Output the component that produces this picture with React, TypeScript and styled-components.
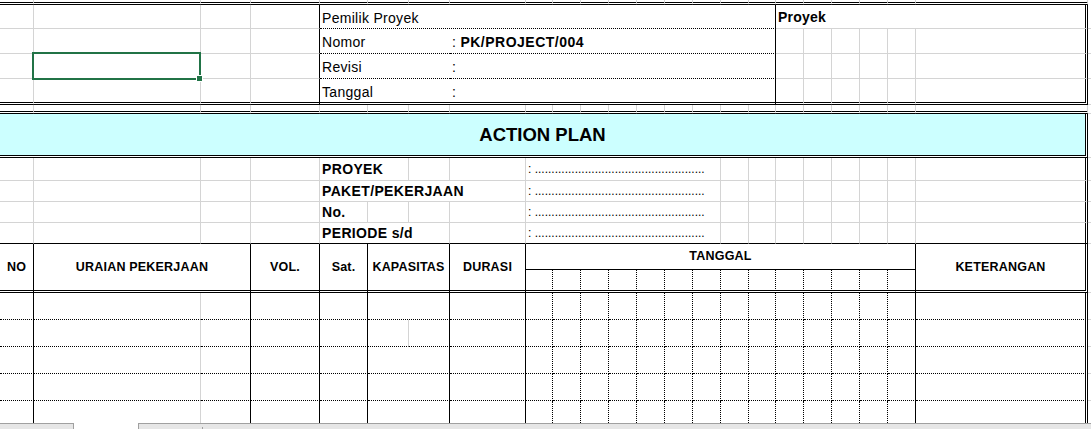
import React from 'react';
import styled, { createGlobalStyle } from 'styled-components';

const GlobalStyle = createGlobalStyle`
  html, body { margin: 0; padding: 0; background: #fff; overflow: hidden; }
  body { font-family: "Liberation Sans", Arial, sans-serif; color: #000; }
`;

type Line = 'g' | 's' | 'd' | 'w' | 'n';

const lineCss = (l: Line) => {
  switch (l) {
    case 'g':
      return '1px solid #d4d4d4';
    case 's':
      return '1px solid #000';
    case 'd':
      return '1px dotted #000';
    case 'w':
      return '3px double #000';
    default:
      return '0';
  }
};

const COLS = [34, 167, 50, 69, 48, 41, 41, 76, 27, 28, 28, 28, 28, 28, 28, 28, 27, 28, 28, 28, 28, 28, 172, 3];
const ROWS = [5, 24, 25, 25, 26, 9, 44, 23, 21, 21, 21, 26, 23, 27, 27, 27, 27, 22];

const Page = styled.div`
  width: 1091px;
  height: 429px;
  display: flex;
  flex-direction: column;
  overflow: hidden;
`;

const Sheet = styled.div`
  position: relative;
  display: grid;
  grid-template-columns: ${COLS.map((c) => `${c}px`).join(' ')};
  grid-template-rows: ${ROWS.map((r) => `${r}px`).join(' ')};
  width: 1091px;
`;

const Cell = styled.div<{
  $r?: Line;
  $b?: Line;
  $span?: number;
  $rows?: number;
  $bg?: string;
  $center?: boolean;
  $pt?: number;
}>`
  box-sizing: border-box;
  grid-column: span ${(p) => p.$span ?? 1};
  grid-row: span ${(p) => p.$rows ?? 1};
  border-right: ${(p) => lineCss(p.$r ?? 'g')};
  border-bottom: ${(p) => lineCss(p.$b ?? 'g')};
  background: ${(p) => p.$bg ?? 'transparent'};
  background-clip: padding-box;
  display: flex;
  align-items: center;
  justify-content: ${(p) => (p.$center ? 'center' : 'flex-start')};
  padding: ${(p) => p.$pt ?? 0}px ${(p) => (p.$center ? 0 : 2)}px 0;
  white-space: nowrap;
  min-width: 0;
  min-height: 0;
`;

const Txt = styled.span<{ $size?: number; $bold?: boolean; $ls?: number }>`
  font-size: ${(p) => p.$size ?? 14}px;
  font-weight: ${(p) => (p.$bold ? 700 : 400)};
  letter-spacing: ${(p) => p.$ls ?? 0.3}px;
  line-height: 16px;
  white-space: nowrap;
`;

const Dots = styled.span`
  font-size: 12px;
  line-height: 14px;
  white-space: nowrap;
`;

const Title = styled.span`
  font-size: 18.5px;
  font-weight: 700;
  line-height: 22px;
`;

const ColHead = styled.span`
  font-size: 12.5px;
  font-weight: 700;
  letter-spacing: 0.2px;
  line-height: 15px;
`;

const Selection = styled.div`
  position: absolute;
  left: 32px;
  top: 52px;
  width: 169px;
  height: 28px;
  box-sizing: border-box;
  border: 2px solid #217346;
  pointer-events: none;
`;

const Handle = styled.div`
  position: absolute;
  left: 163px;
  top: 22px;
  width: 5px;
  height: 5px;
  background: #217346;
  box-shadow: 0 0 0 1px #fff;
`;

const TabStrip = styled.div`
  display: flex;
  height: 6px;
`;

const TabBlock = styled.div<{ $w?: number; $side: 'left' | 'right' }>`
  box-sizing: border-box;
  ${(p) => (p.$w ? `width: ${p.$w}px;` : 'flex: 1;')}
  height: 6px;
  background: #e6e6e6;
  border-top: 1px solid #a0a0a0;
  ${(p) => (p.$side === 'right' ? 'border-right: 1px solid #a0a0a0;' : 'border-left: 1px solid #a0a0a0;')}
  display: flex;
`;

const TabGap = styled.div<{ $w: number }>`
  width: ${(p) => p.$w}px;
  height: 6px;
  background: #fff;
`;

const TabDivider = styled.div`
  margin-left: 63px;
  margin-top: 3px;
  width: 1px;
  background: #a0a0a0;
`;

type Spec = {
  s?: number;
  rs?: number;
  r?: Line;
  b?: Line;
  bg?: string;
  c?: boolean;
  pt?: number;
  children?: React.ReactNode;
};

const e = (n: number, r: Line, b: Line): Spec[] => Array.from({ length: n }, () => ({ r, b }));

const headerBoxRow = (label: string, value: React.ReactNode, last: boolean): Spec[] => {
  const b: Line = last ? 'w' : 'd';
  const gb: Line = last ? 'w' : 'g';
  return [
    ...e(3, 'g', gb),
    { r: 's', b: gb },
    { s: 3, r: 'n', b, pt: 2, children: <Txt>{label}</Txt> },
    { s: 10, r: 's', b, pt: 2, children: value },
    ...e(5, 'g', gb),
    { r: 'w', b: gb },
    { r: 'g', b: 'g' },
  ];
};

const DOTS = ': ' + '.'.repeat(51);

const infoRow = (label: string, spans: number[], last: boolean): Spec[] => {
  const b: Line = last ? 's' : 'g';
  return [
    ...e(4, 'g', b),
    ...spans.map((s, i) => ({
      s,
      r: 'g' as Line,
      b,
      children: i === 0 ? <Txt $bold $ls={0.35}>{label}</Txt> : null,
    })),
    { s: 7, r: 'g', b, children: <Dots>{DOTS}</Dots> },
    ...e(7, 'g', b),
    { r: 'w', b },
    { r: 'g', b: 'g' },
  ];
};

const dataRow = (i: number, last: boolean): Spec[] => {
  const b: Line = last ? 'n' : 'd';
  return [
    { r: 's', b },
    { r: 'g', b },
    { r: 's', b },
    { r: 's', b },
    { r: 's', b },
    ...(i === 1 ? ([{ r: 'g', b }, { r: 's', b }] as Spec[]) : ([{ s: 2, r: 's', b }] as Spec[])),
    { r: 's', b },
    ...e(13, 'd', b),
    { r: 's', b },
    { r: 'w', b },
    { r: 'g', b: last ? 'n' : 'g' },
  ];
};

const head = (text: string, s = 1): Spec => ({
  s,
  rs: 2,
  r: 's',
  b: 'w',
  c: true,
  children: <ColHead>{text}</ColHead>,
});

const rows: Spec[][] = [
  [...e(23, 'g', 'w'), { r: 'g', b: 'n' }],
  [
    ...e(3, 'g', 'g'),
    { r: 's', b: 'g' },
    { s: 13, r: 's', b: 'd', pt: 2, children: <Txt>Pemilik Proyek</Txt> },
    { s: 6, r: 'w', b: 'g', pt: 1, children: <Txt $bold $ls={0.2}>Proyek</Txt> },
    { r: 'g', b: 'g' },
  ],
  headerBoxRow(
    'Nomor',
    <Txt>
      : <Txt $bold $ls={0.5}>PK/PROJECT/004</Txt>
    </Txt>,
    false,
  ),
  headerBoxRow('Revisi', <Txt>:</Txt>, false),
  headerBoxRow('Tanggal', <Txt>:</Txt>, true),
  [...e(23, 'g', 'w'), { r: 'g', b: 'g' }],
  [
    { s: 23, r: 'w', b: 'w', bg: '#ccffff', c: true, children: <Title>ACTION PLAN</Title> },
    { r: 'g', b: 'g' },
  ],
  infoRow('PROYEK', [2, 1, 1], false),
  infoRow('PAKET/PEKERJAAN', [4], false),
  infoRow('No.', [1, 1, 1, 1], false),
  infoRow('PERIODE s/d', [3, 1], true),
  [
    head('NO'),
    head('URAIAN PEKERJAAN', 2),
    head('VOL.'),
    head('Sat.'),
    head('KAPASITAS', 2),
    head('DURASI'),
    { s: 14, r: 's', b: 's', c: true, children: <ColHead>TANGGAL</ColHead> },
    { ...head('KETERANGAN'), r: 'w' },
    { rs: 2, r: 'g', b: 'g' },
  ],
  [...e(13, 'd', 'w'), { r: 's', b: 'w' }],
  dataRow(0, false),
  dataRow(1, false),
  dataRow(2, false),
  dataRow(3, false),
  dataRow(4, true),
];

export default function App() {
  return (
    <Page>
      <GlobalStyle />
      <Sheet>
        {rows.map((row, ri) =>
          row.map((c, ci) => (
            <Cell
              key={`${ri}-${ci}`}
              $span={c.s}
              $rows={c.rs}
              $r={c.r}
              $b={c.b}
              $bg={c.bg}
              $center={c.c}
              $pt={c.pt}
            >
              {c.children}
            </Cell>
          )),
        )}
        <Selection>
          <Handle />
        </Selection>
      </Sheet>
      <TabStrip>
        <TabBlock $w={74} $side="right" />
        <TabGap $w={64} />
        <TabBlock $side="left">
          <TabDivider />
        </TabBlock>
      </TabStrip>
    </Page>
  );
}
